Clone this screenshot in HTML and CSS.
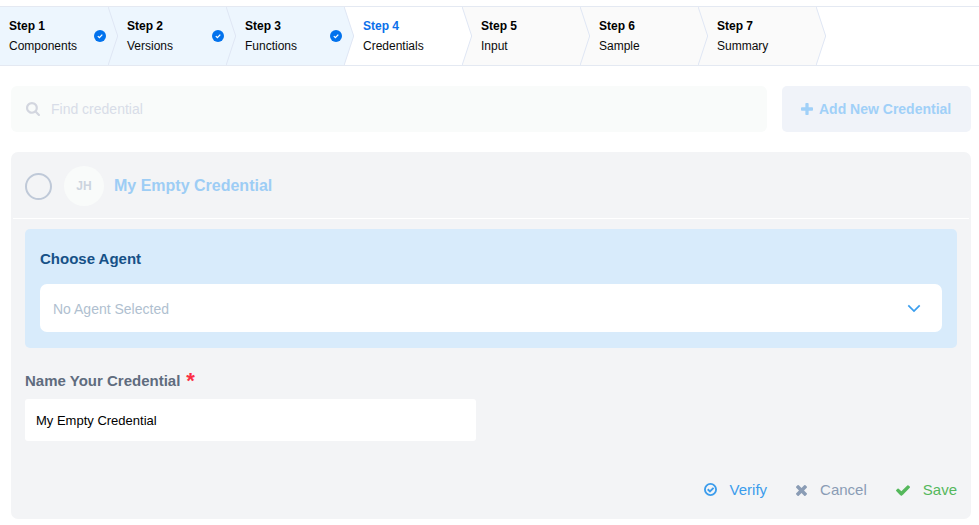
FILE: index.html
```html
<!DOCTYPE html>
<html lang="en">
<head>
<meta charset="utf-8">
<title>Credentials</title>
<link rel="stylesheet" href="styles.css">
</head>
<body>
<svg class="defs" width="0" height="0">
  <symbol id="done" viewBox="0 0 12 12"><circle cx="6" cy="6" r="6" fill="#0272ed"/><path d="M3.8 6.1l1.6 1.5 2.9-3" fill="none" stroke="#fff" stroke-width="1.3"/></symbol>
  <symbol id="arrow" viewBox="0 0 12 58"><path d="M0 0H.2L9.7 29 .2 58H0z"/><path class="edge" d="M.2 0L9.7 29 .2 58" fill="none"/></symbol>
</svg>
<nav class="steps">
  <div class="step done"><div><b>Step 1</b><span>Components</span></div><svg class="tick"><use href="#done"/></svg><svg class="arrow"><use href="#arrow"/></svg></div>
  <div class="step done"><div><b>Step 2</b><span>Versions</span></div><svg class="tick"><use href="#done"/></svg><svg class="arrow"><use href="#arrow"/></svg></div>
  <div class="step done"><div><b>Step 3</b><span>Functions</span></div><svg class="tick"><use href="#done"/></svg><svg class="arrow"><use href="#arrow"/></svg></div>
  <div class="step active"><div><b>Step 4</b><span>Credentials</span></div><svg class="arrow"><use href="#arrow"/></svg></div>
  <div class="step"><div><b>Step 5</b><span>Input</span></div><svg class="arrow"><use href="#arrow"/></svg></div>
  <div class="step"><div><b>Step 6</b><span>Sample</span></div><svg class="arrow"><use href="#arrow"/></svg></div>
  <div class="step"><div><b>Step 7</b><span>Summary</span></div><svg class="arrow"><use href="#arrow"/></svg></div>
</nav>
<main>
  <div class="toolbar">
    <div class="search">
      <svg width="14" height="14" viewBox="64 128 1664 1664"><path d="M1216 832q0-185-131.5-316.5t-316.5-131.5-316.5 131.5-131.5 316.5 131.5 316.5 316.5 131.5 316.5-131.5 131.5-316.5zm512 832q0 52-38 90t-90 38q-54 0-90-38l-343-342q-179 124-399 124-143 0-273.5-55.5t-225-150-150-225-55.5-273.5 55.5-273.5 150-225 225-150 273.5-55.5 273.5 55.5 225 150 150 225 55.5 273.5q0 220-124 399l343 343q37 37 37 90z"/></svg>
      <span>Find credential</span>
    </div>
    <div class="add">
      <svg width="12" height="12" viewBox="192 128 1408 1408"><path d="M1600 736v192q0 40-28 68t-68 28h-416v416q0 40-28 68t-68 28h-192q-40 0-68-28t-28-68v-416h-416q-40 0-68-28t-28-68v-192q0-40 28-68t68-28h416v-416q0-40 28-68t68-28h192q40 0 68 28t28 68v416h416q40 0 68 28t28 68z"/></svg>
      <span>Add New Credential</span>
    </div>
  </div>
  <section class="card">
    <header>
      <i class="radio"></i>
      <span class="avatar">JH</span>
      <h2>My Empty Credential</h2>
    </header>
    <div class="agent">
      <h3>Choose Agent</h3>
      <div class="select"><span>No Agent Selected</span><svg width="14" height="9" viewBox="0 0 14 9"><path d="M1.3 1.3L7 7l5.7-5.7" fill="none" stroke="#3a9eee" stroke-width="1.7"/></svg></div>
    </div>
    <div class="label">Name Your Credential<b>*</b></div>
    <div class="input">My Empty Credential</div>
    <footer>
      <div class="action verify"><svg width="13" height="13" viewBox="0 0 14 14"><circle cx="7" cy="7" r="6" fill="none" stroke="currentColor" stroke-width="2"/><path d="M4 6.8l2.4 2.3 3.9-3.9" fill="none" stroke="currentColor" stroke-width="2.1"/></svg><span>Verify</span></div>
      <div class="action cancel"><svg width="11" height="11" viewBox="302 366 1188 1188"><path d="M1490 1322q0 40-28 68l-136 136q-28 28-68 28t-68-28l-294-294-294 294q-28 28-68 28t-68-28l-136-136q-28-28-28-68t28-68l294-294-294-294q-28-28-28-68t28-68l136-136q28-28 68-28t68 28l294 294 294-294q28-28 68-28t68 28l136 136q28 28 28 68t-28 68l-294 294 294 294q28 28 28 68z"/></svg><span>Cancel</span></div>
      <div class="action save"><svg width="14" height="11" viewBox="121 334 1550 1188"><path d="M1671 566q0 40-28 68l-724 724-136 136q-28 28-68 28t-68-28l-136-136-362-362q-28-28-28-68t28-68l136-136q28-28 68-28t68 28l294 295 656-657q28-28 68-28t68 28l136 136q28 28 28 68z"/></svg><span>Save</span></div>
    </footer>
  </section>
</main>
</body>
</html>
```
FILE: styles.css
```css
* { box-sizing: border-box; }
body {
  margin: 0;
  padding-top: 6px;
  height: 525px;
  overflow: hidden;
  background: #fff;
  font-family: "Liberation Sans", Arial, sans-serif;
}
svg { display: block; flex: none; fill: currentColor; }
.defs { position: absolute; }
h2, h3 { margin: 0; }

.steps {
  display: flex;
  height: 60px;
  border-top: 1px solid #e4e9f2;
  border-bottom: 1px solid #e4e9f2;
  font-size: 12px;
  line-height: 20px;
  color: #0b0b0b;
}
.step {
  position: relative;
  flex: none;
  display: flex;
  align-items: center;
  justify-content: space-between;
  width: 118px;
  padding: 0 2px 0 19px;
  background: #fafafa;
  --fill: #fafafa;
}
.step:first-child { width: 108px; padding-left: 9px; }
.step b, .step span { display: block; }
.step b { color: #000; }
.step.done { background: #edf6fe; --fill: #edf6fe; }
.step.active { background: #fff; --fill: #fff; }
.step.active b { color: #0b70ea; }
.tick { width: 12px; height: 12px; }
.arrow {
  position: absolute;
  z-index: 1;
  left: 100%;
  top: 0;
  width: 12px;
  height: 58px;
  fill: var(--fill);
  stroke: none;
}
.edge { stroke: #dfe6f4; stroke-width: 1; }

main { padding: 20px 8px 0 11px; }
.toolbar { display: flex; gap: 15px; height: 46px; margin-bottom: 20px; }
.search {
  flex: 1;
  display: flex;
  align-items: center;
  gap: 11px;
  padding-left: 15px;
  border-radius: 6px;
  background: #f9fbfa;
  color: #d8dde8;
  font-size: 14px;
}
.search svg { color: #d3d6df; }
.add {
  display: flex;
  align-items: center;
  width: 189px;
  gap: 6px;
  padding-left: 19px;
  border-radius: 5px;
  background: #f0f3f9;
  color: #a0d0f8;
  font-size: 14px;
  font-weight: bold;
  white-space: nowrap;
}
.add svg { margin-bottom: 1px; }

.card {
  height: 367px;
  padding: 0 2px;
  border-radius: 7px;
  background: #f3f4f6;
}
.card header {
  display: flex;
  align-items: center;
  height: 67px;
  padding: 1px 12px 0;
  border-bottom: 1px solid #fff;
}
.radio {
  width: 27px;
  height: 27px;
  margin-top: 1px;
  border: 2px solid #bfc9d8;
  border-radius: 50%;
}
.avatar {
  display: flex;
  align-items: center;
  justify-content: center;
  width: 40px;
  height: 40px;
  margin: 0 10px 0 12px;
  border-radius: 50%;
  background: #f9fbfa;
  color: #ccd4de;
  font-size: 12px;
  font-weight: bold;
}
.card h2 { color: #9dcdf5; font-size: 16px; line-height: 20px; }

.agent {
  height: 119px;
  margin: 10px 12px 0;
  padding: 20px 15px 0;
  border-radius: 5px;
  background: #d8ebfb;
}
.agent h3 { color: #165187; font-size: 15px; line-height: 20px; }
.select {
  display: flex;
  align-items: center;
  justify-content: space-between;
  height: 48px;
  margin-top: 15px;
  padding: 2px 21px 0 13px;
  border-radius: 7px;
  background: #fff;
  color: #b0bfd0;
  font-size: 14px;
}
.select svg { margin-bottom: 2px; }
.label {
  display: flex;
  height: 20px;
  margin: 23px 12px 8px;
  color: #5f6c7e;
  font-size: 15px;
  font-weight: bold;
  line-height: 20px;
}
.label b { margin-left: 6px; color: #fb2d43; font-size: 22px; line-height: 20px; }
.input {
  width: 451px;
  height: 42px;
  margin-left: 12px;
  padding: 1px 11px 0;
  border-radius: 3px;
  background: #fff;
  color: #000;
  font-size: 13px;
  line-height: 42px;
}
footer {
  display: flex;
  justify-content: flex-end;
  gap: 29px;
  margin: 39px 12px 0;
  font-size: 15px;
  line-height: 20px;
}
.action { display: flex; align-items: center; gap: 13px; }
.verify { color: #3b9cec; }
.verify svg { margin-bottom: 1px; }
.cancel { color: #8a9cb5; }
.save { color: #55b85c; }
```
